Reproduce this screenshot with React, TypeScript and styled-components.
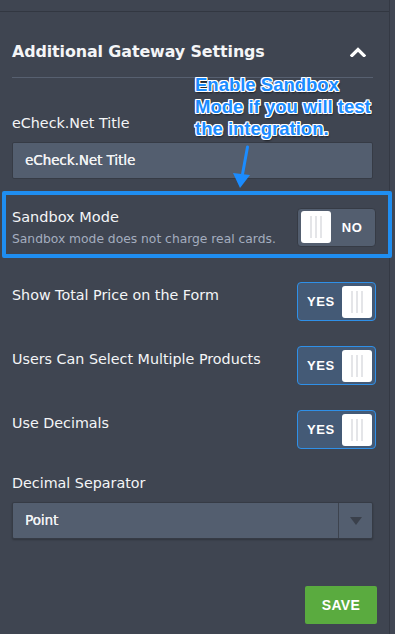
import styled, { createGlobalStyle } from "styled-components";

const GlobalStyle = createGlobalStyle`
  html, body {
    margin: 0;
    padding: 0;
    background: #3f4551;
  }
  * {
    box-sizing: border-box;
  }
`;

const Page = styled.div`
  display: flex;
  width: 395px;
  height: 634px;
  overflow: hidden;
  background: #3f4551;
  font-family: "DejaVu Sans", "Liberation Sans", Arial, sans-serif;
  color: #f4f5f7;
`;

const Column = styled.div`
  width: 389px;
  flex-shrink: 0;
`;

const ScrollStrip = styled.div`
  flex: 1;
  border-left: 1px solid #343944;
  background: #414754;
`;

const TopBar = styled.div`
  height: 12px;
  border-bottom: 1px solid #323741;
`;

const Panel = styled.div`
  position: relative;
  padding: 0 16px 0 12px;
`;

const Header = styled.div`
  display: flex;
  align-items: center;
  justify-content: space-between;
  padding: 29px 7px 14px 0;
  border-bottom: 1px solid #576070;
`;

const Heading = styled.h2`
  margin: 0;
  font-size: 15.9px;
  line-height: 22px;
  font-weight: 700;
  letter-spacing: -0.1px;
`;

const Label = styled.div<{ $top?: number }>`
  margin-top: ${(p) => p.$top ?? 0}px;
  font-size: 14.3px;
  line-height: 20px;
`;

const Field = styled.div`
  margin-top: 9px;
  height: 37px;
  display: flex;
  align-items: center;
  background: #535e6f;
  border: 1px solid #363b45;
  border-radius: 2px;
  padding-left: 12px;
  font-size: 13.4px;
  color: #f2f3f5;
  text-shadow: 0.3px 0 0 #f2f3f5;
`;

const SelectBox = styled(Field)`
  padding-left: 0;
  justify-content: space-between;
  box-shadow: 0 1px 2px rgba(0, 0, 0, 0.25);
  & > span {
    padding-left: 12px;
  }
`;

const Caret = styled.div`
  width: 34px;
  height: 100%;
  border-left: 1px solid #3d434e;
  display: flex;
  align-items: center;
  justify-content: center;
  &::after {
    content: "";
    border-left: 6px solid transparent;
    border-right: 6px solid transparent;
    border-top: 8px solid #3a404b;
  }
`;

const Row = styled.div<{ $top: number }>`
  margin-top: ${(p) => p.$top}px;
  display: flex;
  align-items: flex-start;
  justify-content: space-between;
  & > ${Label} {
    padding-top: 3px;
  }
`;

const HighlightRow = styled.div`
  position: relative;
  margin-top: 16px;
  display: flex;
  align-items: center;
  justify-content: space-between;
  padding: 12px 0 7px;
  &::after {
    content: "";
    position: absolute;
    left: -10px;
    right: -19px;
    top: -4px;
    bottom: -4px;
    border: 4px solid #1f8ef1;
    border-radius: 2px;
  }
`;

const RowTitle = styled.div`
  font-size: 14.5px;
  line-height: 20px;
`;

const RowHint = styled.div`
  margin-top: 4px;
  font-size: 12.3px;
  line-height: 16px;
  color: #a4adbf;
`;

const Toggle = styled.div<{ $on: boolean }>`
  width: 79px;
  height: 39px;
  margin-right: -3px;
  display: flex;
  flex-direction: ${(p) => (p.$on ? "row" : "row-reverse")};
  align-items: center;
  justify-content: space-between;
  padding: 0 3px 0 ${(p) => (p.$on ? 9 : 3)}px;
  border-radius: 4px;
  background: ${(p) => (p.$on ? "#445a76" : "#535e6f")};
  border: 1px solid ${(p) => (p.$on ? "#2f90e8" : "#363b45")};
  font-family: "Liberation Sans", Arial, sans-serif;
  font-size: 13px;
  font-weight: 700;
  letter-spacing: 0.6px;
  color: #fff;
  & > span {
    width: ${(p) => (p.$on ? "auto" : "40px")};
    text-align: center;
  }
`;

const Knob = styled.div`
  width: 30px;
  height: 32px;
  border-radius: 3px;
  background: #fff;
  display: flex;
  align-items: center;
  justify-content: center;
  gap: 3px;
  & > i {
    width: 2px;
    height: 22px;
    background: #e4e5e8;
  }
`;

const Footer = styled.div`
  margin-top: 47px;
  display: flex;
  justify-content: flex-end;
`;

const SaveButton = styled.button`
  width: 72px;
  height: 38px;
  margin-right: -4px;
  border: none;
  border-radius: 2px;
  background: #5aab3f;
  color: #fff;
  font-family: "Liberation Sans", Arial, sans-serif;
  font-size: 14px;
  font-weight: 700;
  letter-spacing: 0.3px;
`;

const Note = styled.div`
  position: absolute;
  left: 195px;
  top: 62px;
  width: 200px;
  font-family: "Liberation Sans", Arial, sans-serif;
  font-size: 18.5px;
  line-height: 22px;
  font-weight: 700;
  color: #1b8cff;
  text-shadow: 1px 0 0 #fff, -1px 0 0 #fff, 0 1px 0 #fff, 0 -1px 0 #fff,
    1px 1px 0 #fff, -1px -1px 0 #fff, 1px -1px 0 #fff, -1px 1px 0 #fff,
    1px 2px 2px rgba(0, 0, 0, 0.6);
`;

const Arrow = styled.svg`
  position: absolute;
  left: 222px;
  top: 123px;
`;

const Chevron = () => (
  <svg width="16" height="10" viewBox="0 0 16 10">
    <path d="M2 8.5 L8 2.5 L14 8.5" fill="none" stroke="#fff" strokeWidth="3.2" strokeLinecap="square" />
  </svg>
);

const Switch = ({ on }: { on: boolean }) => (
  <Toggle $on={on}>
    <span>{on ? "YES" : "NO"}</span>
    <Knob>
      <i />
      <i />
      <i />
    </Knob>
  </Toggle>
);

const options = [
  { label: "Show Total Price on the Form", top: 28 },
  { label: "Users Can Select Multiple Products", top: 25 },
  { label: "Use Decimals", top: 25 },
];

const App = () => {
  return (
    <Page>
      <GlobalStyle />
      <Column>
        <TopBar />
        <Panel>
          <Header>
            <Heading>Additional Gateway Settings</Heading>
            <Chevron />
          </Header>
          <Label $top={35}>eCheck.Net Title</Label>
          <Field>eCheck.Net Title</Field>
          <HighlightRow>
            <div>
              <RowTitle>Sandbox Mode</RowTitle>
              <RowHint>Sandbox mode does not charge real cards.</RowHint>
            </div>
            <Switch on={false} />
          </HighlightRow>
          {options.map((o) => (
            <Row key={o.label} $top={o.top}>
              <Label>{o.label}</Label>
              <Switch on />
            </Row>
          ))}
          <Label $top={24}>Decimal Separator</Label>
          <SelectBox>
            <span>Point</span>
            <Caret />
          </SelectBox>
          <Footer>
            <SaveButton>SAVE</SaveButton>
          </Footer>
          <Note>
            Enable Sandbox
            <br />
            Mode if you will test
            <br />
            the integration.
          </Note>
          <Arrow width="40" height="56" viewBox="0 0 40 56">
            <path d="M25.5 12 L20 42" stroke="#1b8cff" strokeWidth="3" strokeLinecap="round" />
            <path d="M11 38 L18 53 L28 40 Z" fill="#1b8cff" />
          </Arrow>
        </Panel>
      </Column>
      <ScrollStrip />
    </Page>
  );
};

export default App;
